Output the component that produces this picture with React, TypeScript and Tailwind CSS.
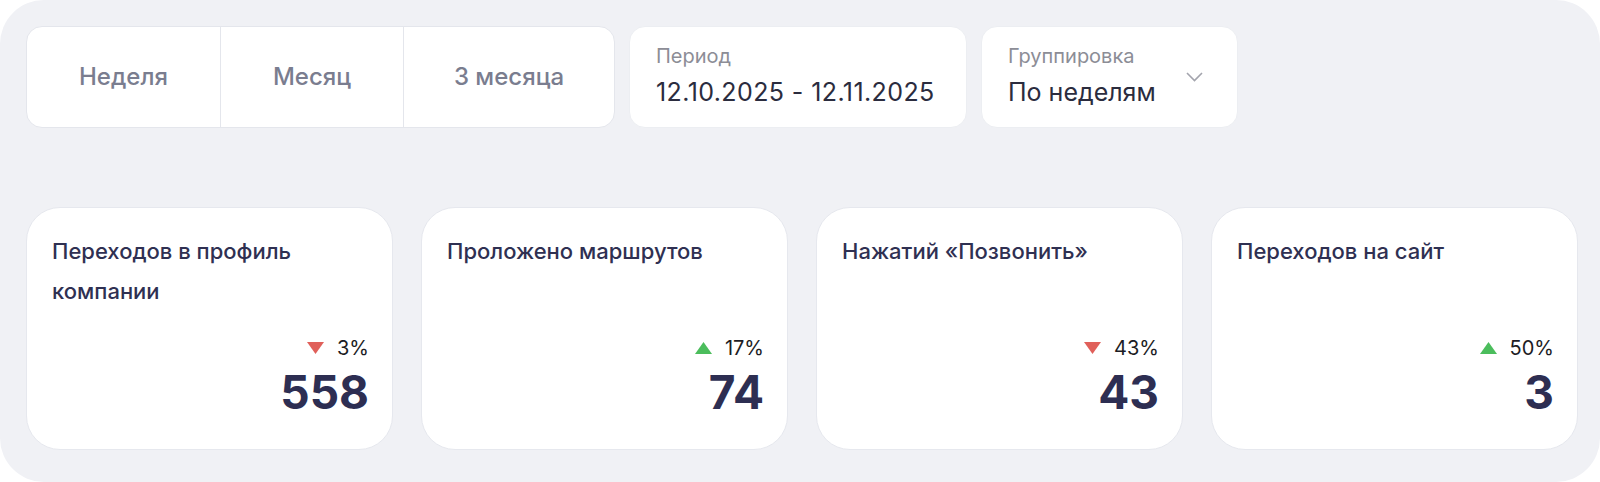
import React from 'react';

type Trend = 'up' | 'down';

interface Metric {
  title: string;
  change: number;
  trend: Trend;
  value: number;
}

const metrics: Metric[] = [
  { title: 'Переходов в профиль компании', change: 3, trend: 'down', value: 558 },
  { title: 'Проложено маршрутов', change: 17, trend: 'up', value: 74 },
  { title: 'Нажатий «Позвонить»', change: 43, trend: 'down', value: 43 },
  { title: 'Переходов на сайт', change: 50, trend: 'up', value: 3 },
];

const ranges = [
  { label: 'Неделя', width: 'w-[193px]' },
  { label: 'Месяц', width: 'w-[183px]' },
  { label: '3 месяца', width: 'w-[211px]' },
];

const TrendMark: React.FC<{ trend: Trend }> = ({ trend }) => (
  <svg width="17" height="12" viewBox="0 0 17 12" className="shrink-0">
    {trend === 'up' ? (
      <path d="M8.5 0 L17 12 L0 12 Z" fill="#4bbd5c" />
    ) : (
      <path d="M0 0 L17 0 L8.5 12 Z" fill="#e0605a" />
    )}
  </svg>
);

const MetricCard: React.FC<{ metric: Metric }> = ({ metric }) => (
  <div className="flex h-[243px] w-[367px] flex-col justify-between rounded-[34px] border border-[#e6e8ee] bg-white pb-[34px] pl-[25px] pr-[23px] pt-[23px]">
    <h3 className="max-w-[260px] text-[22px] font-medium leading-[40px] text-[#2f3052]">
      {metric.title}
    </h3>
    <div className="flex flex-col items-end">
      <div className="flex items-center gap-[13px]">
        <TrendMark trend={metric.trend} />
        <span className="text-[20px] leading-[24px] text-[#1c1c24]">{metric.change}%</span>
      </div>
      <span className="mt-[9px] text-[46px] font-bold leading-[46px] text-[#2d2e52]">
        {metric.value}
      </span>
    </div>
  </div>
);

const App: React.FC = () => {
  return (
    <div className="h-[482px] w-[1600px] bg-white font-['Inter',sans-serif]">
      <div className="h-full rounded-[44px] bg-[#f0f1f5] pl-[26px] pr-[20px] pt-[26px]">
        <div className="flex h-[102px] gap-[14px]">
          <div className="flex rounded-[16px] border border-[#e4e6ec] bg-white">
            {ranges.map((r, i) => (
              <button
                key={r.label}
                className={`${r.width} text-[24px] font-medium text-[#7a7d8f] ${
                  i > 0 ? 'border-l border-[#e4e6ec]' : ''
                }`}
              >
                {r.label}
              </button>
            ))}
          </div>

          <div className="flex w-[338px] flex-col justify-center rounded-[16px] border border-[#eceef2] bg-white px-[26px] pb-[4px]">
            <span className="text-[20px] leading-[26px] text-[#8c8d96]">Период</span>
            <span className="mt-[8px] text-[25px] leading-[30px] tracking-[0.4px] text-[#2b2c3e]">
              12.10.2025 - 12.11.2025
            </span>
          </div>

          <div className="flex w-[257px] items-center justify-between rounded-[16px] border border-[#eceef2] bg-white pl-[26px] pr-[34px]">
            <div className="flex flex-col pb-[4px]">
              <span className="text-[20px] leading-[26px] text-[#8c8d96]">Группировка</span>
              <span className="mt-[8px] text-[25px] leading-[30px] text-[#2b2c3e]">По неделям</span>
            </div>
            <svg width="17" height="10" viewBox="0 0 17 10">
              <path d="M1 1 L8.5 8.5 L16 1" fill="none" stroke="#a3a4ad" strokeWidth="1.6" />
            </svg>
          </div>
        </div>

        <div className="mt-[79px] flex gap-[28px]">
          {metrics.map((m) => (
            <MetricCard key={m.title} metric={m} />
          ))}
        </div>
      </div>
    </div>
  );
};

export default App;
